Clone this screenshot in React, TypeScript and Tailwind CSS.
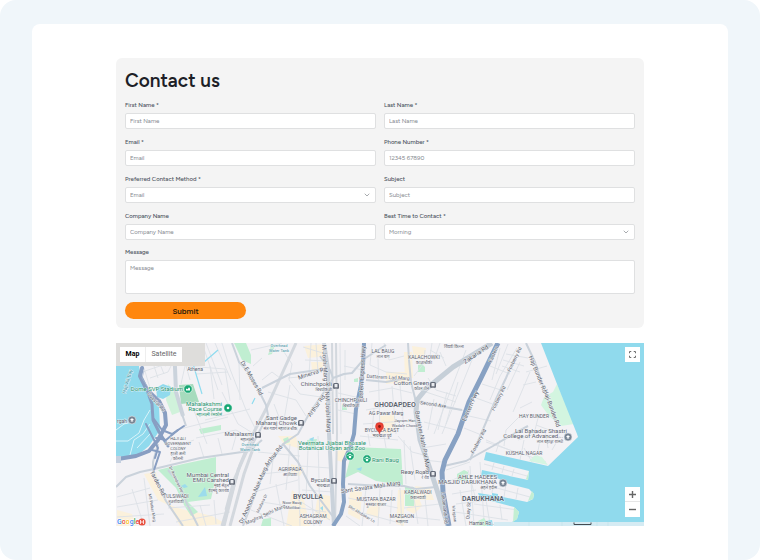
import { FiChevronDown } from "react-icons/fi";
import { twMerge } from "tailwind-merge";

const fieldClass =
  "w-full h-4 block rounded-[2px] border border-[#dfe0e1] bg-white px-1 text-[6px] leading-[8px] text-[#85898f] placeholder:text-[#85898f] outline-none";

const fields = [
  { id: "firstName", label: "First Name *", placeholder: "First Name" },
  { id: "lastName", label: "Last Name *", placeholder: "Last Name" },
  { id: "email", label: "Email *", placeholder: "Email", type: "email" },
  { id: "phone", label: "Phone Number *", placeholder: "12345 67890", type: "tel" },
  { id: "method", label: "Preferred Contact Method *", options: ["Email"] },
  { id: "subject", label: "Subject", placeholder: "Subject" },
  { id: "company", label: "Company Name", placeholder: "Company Name" },
  { id: "time", label: "Best Time to Contact *", options: ["Morning"] },
];

const lanes = [
  "M141 343L143 352 156 363 166 366M131 366L136 374 160 366 174 356M150 378L168 372 172 364M144 368L150 388M154 366L158 378M160 364L164 374",
  "M185 366L181 384M190 380L186 366 225 369 230 401M202 343L218 390M206 343L222 385M215 343L231 380M196 374L228 372M210 366L214 399M222 343L230 369 246 410 256 430",
  "M193 408L207 444M205 420L250 409M222 392L238 424 251 432M239 362L240 400M176 430L228 417M196 438L236 430 250 438",
  "M251 350L282 343M253 366L262 358M284 352L292 364 289 380 300 394 328 398M288 378L310 376 328 368M303 347L326 354M305 360L327 361M311 343L309 375M316 343L318 372",
  "M262 380L272 372 280 378M268 392L296 400 306 416M274 404L282 425 298 430M290 385L284 420M340 343L341 434M344 366L363 370M338 393L360 398M338 410L356 414M345 350L345 380",
  "M372 343L370 365 386 372 407 374M369 392L392 388 412 393M366 410L388 406 416 408M378 358L380 434M392 386L396 434M363 424L418 420M372 434L374 408M384 343L389 360 404 356",
  "M400 385L404 430M425 350L424 363 414 376M428 378L436 390 456 396M430 350L444 358M432 343L430 356 414 359M440 352L446 366M420 400L440 407 468 411M434 399L428 430M447 392L438 430M458 382L446 424M420 390L456 402M424 422L456 430M440 343L434 360",
  "M466 350L434 434M476 350L442 434M490 366L510 374M482 384L504 391M476 398L498 406M469 416L491 421M464 428L484 436M500 348L492 380M508 344L496 374M517 348L500 376 490 400M503 360L524 366M502 366L520 372M506 354L528 358M520 362L507 390",
  "M526 372L547 366M523 385L536 382M530 372L513 412M520 408L532 402M536 425L560 434M518 440L545 430 548 448M504 446L506 430 520 416M486 440L514 452M538 418L534 434M524 448L532 462",
  "M132 489L144 526M144 478L150 526M117 507L158 500M117 517L164 514M117 497L150 488M168 508L210 505M176 522L230 512M200 505L206 526M214 500L216 524M170 462L178 446 194 440M199 442L204 458M218 438L222 454M236 436L232 450",
  "M258 452L300 456M262 474L298 470M274 452L270 484M290 444L286 490M254 492L298 480M262 502L326 512M276 484L284 526M298 440L300 526M308 450L306 498M318 436L320 526M251 510L292 526M300 466L330 468M302 490L334 492M298 500L330 520M312 500L314 526",
  "M360 436L398 440M368 434L370 446M384 436L386 448M404 440L406 484M398 436L412 452 428 456M410 446L415 480M348 498L398 508M352 510L396 522M366 488L362 526M380 488L378 526M392 490L390 524M400 488L402 526M346 516L360 526M404 508L440 504M412 486L418 524M424 488L428 526M402 516L440 520",
  "M422 448L446 444M424 460L442 462M446 470L470 462M448 482L466 474 480 478M452 494L476 490M456 504L490 500M455 512L508 520M460 490L466 526M470 466L474 526M480 462L484 520M486 500L490 524M500 505L502 520M474 504L518 510M468 470L476 500",
  "M484 464L527 476M494 463L492 470M504 466L502 473M514 469L512 476M482 484L530 497M494 478L492 493M506 484L504 497M518 488L516 499M486 442L546 462M500 440L496 452M524 440L520 460M540 440L536 462M560 436L552 450",
];

const roads = [
  "M174 343L176 392 182 414 186 426",
  "M116 487L126 477 140 472 154 469 200 458 249 451 262 440",
  "M158 444L153 462 153 474 166 501 183 526",
  "M168 470L178 482 187 504 198 526",
  "M232 343L239 362 251 375 266 405 268 415 258 434 249 451",
  "M333 379L309 414 298 434 283 444 263 474 243 526",
  "M320 356L330 370 333 378 344 374 352 373 364 359 386 345",
  "M408 343L409 360 411 382 416 402",
  "M348 484L381 486 404 486 416 489 436 487",
  "M444 466L466 461 493 446 515 433 528 426",
  "M526 343L535 362 544 389 557 425",
  "M516 355L506 378 496 399 481 434 470 460",
  "M283 444L298 462 310 486 334 518",
  "M262 388L290 374 324 369",
  "M366 380L386 382 407 378",
  "M418 402L440 406 462 410",
];

const blocks = [
  "M304 346L326 344 328 356 308 358Z",
  "M311 362L324 362 322 370 312 370Z",
  "M404 352L412 352 413 378 405 378Z",
  "M412 346L426 348 424 360 414 359Z",
  "M386 372L408 372 407 382 386 384Z",
  "M144 474L156 472 160 488 168 505 158 500Z",
  "M168 504L178 508 200 514 198 526 180 526Z",
  "M117 510L132 514 136 526 117 526Z",
  "M196 512L212 516 226 524 196 526Z",
  "M278 436L296 436 298 448 284 444Z",
  "M292 490L304 500 310 526 286 526Z",
  "M291 464L304 468 300 476 291 474Z",
  "M318 494L330 496 330 520 314 518Z",
  "M350 490L362 492 360 520 348 514Z",
  "M370 500L382 500 378 518 366 514Z",
  "M398 490L404 490 404 526 396 524Z",
  "M415 486L430 488 434 500 418 500Z",
  "M338 446L350 448 342 462 336 460Z",
  "M380 416L394 414 396 432 382 434Z",
  "M416 490L422 506 414 514 406 510Z",
];

const parks = [
  "M234 343L246 343 251 355 251 364 242 360Z",
  "M199 429L221 425 221 430 201 434Z",
  "M158 470L183 464 216 457 216 477 211 499 188 502 198 512 191 516 184 505 176 488Z",
  "M353 447L401 449 403 485 376 481 358 472 345 478Z",
  "M405 487L414 487 414 506 405 506Z",
  "M418 365L422 364 425 367 425 372 418 372Z",
  "M263 519L271 518 271 526 261 526Z",
  "M457 474L464 470 468 472 468 481 457 480Z",
  "M268 355L271 346 275 345 272 354Z",
  "M283 439L288 437 290 442 285 444Z",
  "M354 379L358 378 358 382 354 382Z",
  "M307 440L317 439 315 448 308 446Z",
  "M342 405L346 404 347 410 342 410Z",
];

const ink = "#5c626d";
const green = "#26946d";
const teal = "#3a93a4";

type Label = {
  t: string;
  x: number;
  y: number;
  s?: number;
  c?: string;
  r?: number; // angle of a street name
  b?: boolean;
  a?: "start" | "end";
};

const labels: Label[] = [
  { t: "Dome SVP Stadium", x: 183, y: 391, s: 6, c: green, a: "end" },
  { t: "Mahalakshmi", x: 222, y: 406, s: 6, c: green, a: "end" },
  { t: "Race Course", x: 222, y: 411, s: 6, c: green, a: "end" },
  { t: "महालक्ष्मी रेसकोर्स", x: 222, y: 416, s: 4, c: green, a: "end" },
  { t: "Haji Ali Bay", x: 129, y: 382, s: 5, c: teal, r: -74 },
  { t: "Coastal Rd", x: 155, y: 403, s: 5, r: 48 },
  { t: "rgah", x: 117, y: 423, s: 5, a: "start" },
  { t: "Mahalaxmi", x: 254, y: 436, s: 6, a: "end" },
  { t: "महालक्ष्मी", x: 254, y: 441, s: 4, a: "end" },
  { t: "Overhead", x: 279, y: 347, s: 4, c: teal },
  { t: "Water Tank", x: 279, y: 352, s: 4, c: teal },
  { t: "Athena", x: 195, y: 371, s: 5 },
  { t: "Minerva Rd", x: 313, y: 375, s: 6, r: -18 },
  { t: "Dr E Moses Rd", x: 250, y: 379, s: 6, r: 60 },
  { t: "M Joshi Marg", x: 323, y: 363, s: 6, r: 87 },
  { t: "NM Joshi Marg", x: 326, y: 412, s: 6, r: 87 },
  { t: "Chinchpokli", x: 332, y: 386, s: 6, a: "end" },
  { t: "चिंचपोकळी", x: 332, y: 391, s: 4, a: "end" },
  { t: "CHINCHPOKLI", x: 351, y: 402, s: 5 },
  { t: "चिंचपोकळी", x: 351, y: 407, s: 4 },
  { t: "Arthur Rd", x: 318, y: 407, s: 6, r: -54 },
  { t: "Sant Gadge", x: 297, y: 420, s: 6, a: "end" },
  { t: "Maharaj Chowk", x: 297, y: 425, s: 6, a: "end" },
  { t: "संत गाडगे महाराज चौक", x: 297, y: 430, s: 4, a: "end" },
  { t: "Eastern Express Hwy", x: 364, y: 374, s: 6, r: -87 },
  { t: "LAL BAUG", x: 383, y: 353, s: 5 },
  { t: "लाल बाग", x: 383, y: 358, s: 4 },
  { t: "Dattaram Lad Marg", x: 388, y: 379, s: 5, r: 3 },
  { t: "KALACHOWKI", x: 424, y: 359, s: 5 },
  { t: "काळाचौकी", x: 424, y: 364, s: 4 },
  { t: "शिवडी किल्ला", x: 454, y: 348, s: 4 },
  { t: "Zakaria Rd", x: 477, y: 356, s: 6, r: -34 },
  { t: "Cotton Green", x: 429, y: 385, s: 6, a: "end" },
  { t: "कॉटन ग्रीन", x: 429, y: 390, s: 4, a: "end" },
  { t: "GHODAPDEO", x: 395, y: 407, s: 7, b: true },
  { t: "AG Pawar Marg", x: 386, y: 415, s: 5 },
  { t: "Second Ave", x: 433, y: 406, s: 5, r: 8 },
  { t: "BYCULLA EAST", x: 382, y: 432, s: 5 },
  { t: "भायखळा पूर्व", x: 382, y: 437, s: 4 },
  { t: "Jayram Hari", x: 405, y: 422, s: 4 },
  { t: "Wadale Chowk", x: 405, y: 427, s: 4 },
  { t: "Barrister Nath Pai Marg", x: 421, y: 442, s: 6, r: 79 },
  { t: "Eastern Fwy", x: 472, y: 407, s: 6, r: -66 },
  { t: "Eastern", x: 495, y: 355, s: 5, r: -66 },
  { t: "Fosberry Rd", x: 500, y: 399, s: 5, r: -64 },
  { t: "Fosberry Rd", x: 516, y: 360, s: 5, r: -64 },
  { t: "Fosberry Rd", x: 480, y: 442, s: 5, r: -62 },
  { t: "Haji Bunder Rd", x: 536, y: 375, s: 6, r: 68 },
  { t: "Haji Bunder Rd", x: 550, y: 409, s: 6, r: 70 },
  { t: "HAY BUNDER", x: 534, y: 418, s: 5 },
  { t: "Lal Bahadur Shastri", x: 541, y: 433, s: 6 },
  { t: "College of Advanced...", x: 563, y: 438, s: 6, a: "end" },
  { t: "लाल बहादुर शास्त्री", x: 563, y: 443, s: 4, a: "end" },
  { t: "KUSHAL NAGAR", x: 524, y: 455, s: 5 },
  { t: "HAJI ALI", x: 178, y: 440, s: 4 },
  { t: "GOVERNMENT", x: 178, y: 445, s: 4 },
  { t: "COLONY", x: 178, y: 450, s: 4 },
  { t: "हाजी अली", x: 178, y: 455, s: 4 },
  { t: "कॉलनी", x: 178, y: 460, s: 4 },
  { t: "Overhead", x: 250, y: 446, s: 4, c: teal },
  { t: "Water Tank", x: 250, y: 451, s: 4, c: teal },
  { t: "Mumbai Central", x: 229, y: 477, s: 6, a: "end" },
  { t: "EMU Carshed", x: 229, y: 482, s: 6, a: "end" },
  { t: "मुंबई सेंट्रल", x: 229, y: 487, s: 4, a: "end" },
  { t: "ईएमयू कारशेड", x: 229, y: 492, s: 4, a: "end" },
  { t: "TULSIWADI", x: 176, y: 498, s: 5 },
  { t: "तुळशीवाडी", x: 176, y: 503, s: 4 },
  { t: "Tardeo Rd", x: 156, y: 484, s: 6, r: 63 },
  { t: "Dr Anandrao Rd", x: 175, y: 480, s: 4, r: 65 },
  { t: "MS Patkar Marg", x: 151, y: 508, s: 4, r: 80 },
  { t: "Dr Anandrao Nair Marg", x: 255, y: 496, s: 6, r: -66 },
  { t: "Arthur Rd", x: 275, y: 457, s: 6, r: -52 },
  { t: "Maulana Dr", x: 263, y: 504, s: 4, r: -64 },
  { t: "Maghraj Sethi Marg", x: 266, y: 516, s: 5, r: -24 },
  { t: "AGRIPADA", x: 290, y: 471, s: 5 },
  { t: "आग्रीपाडा", x: 290, y: 476, s: 4 },
  { t: "Noor Baug", x: 292, y: 504, s: 4 },
  { t: "Veermata Jijabai Bhosale", x: 332, y: 445, s: 6, c: green },
  { t: "Botanical Udyan and Zoo", x: 332, y: 450, s: 6, c: green },
  { t: "Rani Baug", x: 372, y: 462, s: 6, c: green, a: "start" },
  { t: "Byculla", x: 330, y: 482, s: 6, a: "end" },
  { t: "भायखळा", x: 330, y: 487, s: 4, a: "end" },
  { t: "BYCULLA", x: 308, y: 499, s: 7, b: true },
  { t: "Motlibai", x: 293, y: 509, s: 4 },
  { t: "ASHAGRAM", x: 313, y: 518, s: 5 },
  { t: "COLONY", x: 313, y: 524, s: 5 },
  { t: "Sant Savata Mali Marg", x: 371, y: 489, s: 6, r: -8 },
  { t: "MUSTAFA BAZAR", x: 376, y: 501, s: 5 },
  { t: "मुस्तफा बाजार", x: 376, y: 506, s: 4 },
  { t: "Shri Abubakar Ln", x: 361, y: 515, s: 4, r: 31 },
  { t: "KABALWADI", x: 418, y: 494, s: 5 },
  { t: "कबालवाडी", x: 418, y: 499, s: 4 },
  { t: "MAZGAON", x: 402, y: 518, s: 5 },
  { t: "माझगाव", x: 402, y: 523, s: 4 },
  { t: "Reay Road", x: 429, y: 474, s: 6, a: "end" },
  { t: "रे रोड", x: 429, y: 479, s: 4, a: "end" },
  { t: "Lakamandi Rd", x: 443, y: 508, s: 5, r: 84 },
  { t: "Mazgaon", x: 453, y: 514, s: 4, r: 84 },
  { t: "AHLE HADEES", x: 497, y: 479, s: 6, a: "end" },
  { t: "MASJID DARUKHANA", x: 497, y: 484, s: 6, a: "end" },
  { t: "अहले हदीस", x: 497, y: 489, s: 4, a: "end" },
  { t: "DARUKHANA", x: 483, y: 501, s: 7, b: true },
  { t: "Quay St", x: 470, y: 511, s: 5, r: -85 },
  { t: "Hamar Ro...", x: 482, y: 525, s: 5 },
];

const stations = [
  [336, 386],
  [258, 435],
  [433, 385],
  [232, 482],
  [334, 481],
  [433, 474],
  [301, 423],
];

const greenPins = [
  [188, 389],
  [228, 408],
  [350, 456],
  [367, 459],
];

const grayPins = [
  [132, 420],
  [568, 437],
  [503, 483],
];

function Field({ field }: { field: (typeof fields)[number] }) {
  return (
    <div className="flex flex-col gap-1">
      <label htmlFor={field.id} className="text-[6px] leading-[8px] font-medium text-[#4a525d]">
        {field.label}
      </label>
      {field.options ? (
        <div className="relative">
          <select id={field.id} className={twMerge(fieldClass, "appearance-none")}>
            {field.options.map((option) => (
              <option key={option}>{option}</option>
            ))}
          </select>
          <FiChevronDown className="absolute right-[5px] top-1 w-2 h-2 text-[#7c8086] pointer-events-none" />
        </div>
      ) : (
        <input
          id={field.id}
          type={field.type ?? "text"}
          placeholder={field.placeholder}
          className={fieldClass}
        />
      )}
    </div>
  );
}

function MapDrawing() {
  return (
    <svg
      viewBox="116 343 528 183"
      className="block w-full h-auto"
      fontFamily="Roboto, 'Noto Sans', sans-serif"
      role="img"
      aria-label="Map">
      <rect x="116" y="343" width="528" height="183" fill="#f3f2f5" />
      {blocks.map((d) => (
        <path key={d} d={d} fill="#fbf1dc" />
      ))}
      <path d="M168 384L174 390 178 402 180 412 172 415 166 400Z" fill="#d0f2db" />
      <path d="M179 385L193 384 199 402 181 404Z" fill="#a6dbbd" />
      {parks.map((d) => (
        <path key={d} d={d} fill="#c0eed1" />
      ))}
      <path d="M557 384L574 424 561 426 549 416 541 405 544 397 553 392Z" fill="#d3f5e0" />
      <g fill="none" stroke="#dce1e7" strokeWidth="0.9">
        {lanes.map((d) => (
          <path key={d} d={d} />
        ))}
      </g>
      {/* rail yards */}
      <g fill="none" stroke="#d3d8de">
        <path d="M296 343L266 409 253 434 240 465 222 526" strokeWidth="3" />
        <path d="M252 440L238 470 224 526M254 446L244 474 230 526M249 446L234 480 226 510" strokeWidth="3" />
        <path d="M336 343L337 434 335 526M332 343L333 434" strokeWidth="2" />
      </g>
      <g fill="none" stroke="#cad2db" strokeWidth="2" strokeLinejoin="round">
        {roads.map((d) => (
          <path key={d} d={d} />
        ))}
      </g>
      <path d="M174 343L176 392 183 416" fill="none" stroke="#cbd3dc" strokeWidth="4" />
      <path d="M324 343L328 369 329 434 334 526" fill="none" stroke="#cad2db" strokeWidth="4" />
      <path
        d="M492 343L453 367 426 389 417 400 416 412 420 440 427 460 436 487 448 526"
        fill="none"
        stroke="#c6cfd8"
        strokeWidth="5"
        strokeLinejoin="round"
      />
      {/* harbour */}
      <path
        d="M541 343L557 384 577 434 578 437 548 466 486 452 484 460 529 471 528 480 482 470 481 476 495 477 509 484 529 489 534 494 533 499 527 502 503 497 478 493 480 498 514 507 519 512 517 519 512 522 494 526 644 526 644 343Z"
        fill="#90daed"
      />
      <path d="M548 465L529 461 535 455 542 457Z" fill="#d5f5e2" />
      <path d="M529 471L526 479 528 480ZM532 491L534 494 533 499 528 501ZM514 507L519 512 517 519 513 522ZM478 521L484 518 490 526 474 526Z" fill="#c3efd3" />
      <path d="M486 521L492 520 493 526 487 526ZM492 493L498 494 498 497 492 496Z" fill="#90daed" />
      {/* Haji Ali bay */}
      <path
        d="M116 366L139 366 141 380 149 393 159 404 160 430 149 446 138 455 116 459Z"
        fill="#90daed"
      />
      <path d="M156 388L163 384 171 387 170 395 163 399 157 397Z" fill="#90daed" />
      <path
        d="M116 441L128 441 139 433 144 420 150 410M130 455L134 440 143 434 150 424M116 430L124 424 132 422M137 448L150 434"
        fill="none"
        stroke="#d9f4fa"
        strokeWidth="1"
      />
      <path d="M193 364L202 394M203 363L218 350M252 404L255 398" stroke="#8fdcf0" strokeWidth="1.2" />
      <path d="M198 497L205 487 207 496ZM181 486L185 484 188 487 184 488ZM356 469L362 467 361 471ZM309 439L314 437 313 442ZM320 508L323 506 323 511Z" fill="#9cdcec" />
      <g fill="none" stroke="#889ec2" strokeLinejoin="round" strokeLinecap="round">
        <path d="M142 368L140 376 147 390 159 401 165 413 166 425 158 440 149 451 136 456 118 459" strokeWidth="4" />
        <path d="M148 393L152 404 153 420 159 432 168 446" strokeWidth="3" />
        <path d="M184 426L172 434 162 430 154 419M152 450L160 452 154 470" strokeWidth="2" />
        <path d="M146 424L158 448 155 458M178 430L166 440 156 438" strokeWidth="2" />
      </g>
      <path d="M144 371L142 378 149 389 160 400" fill="none" stroke="#a9b9d3" strokeWidth="0.7" />
      <g fill="none" stroke="#87a1c3" strokeLinejoin="round">
        <path d="M364 343L363 366 361 385 356 409 354 434 350 448 344 461 343 484 344 502 341 514 333 526" strokeWidth="4" />
        <path d="M498 343L481 378 469 402 458 434 445 460 442 472 443 492 449 526" strokeWidth="5" />
      </g>
      <path d="M116 456H121V463H116Z" fill="#c5d0df" />
      <g stroke="#f6f7f9" strokeOpacity="0.8" strokeWidth="1" paintOrder="stroke" strokeLinejoin="round">
        {labels.map((l, i) => (
          <text
            key={i}
            x={l.x}
            y={l.y}
            fontSize={l.s ?? 5}
            fontWeight={l.b ? 600 : 400}
            fill={l.c ?? ink}
            textAnchor={l.a ?? "middle"}
            transform={l.r ? `rotate(${l.r} ${l.x} ${l.y})` : undefined}>
            {l.t}
          </text>
        ))}
      </g>
      {stations.map(([x, y]) => (
        <g key={`${x}-${y}`}>
          <rect x={x - 3} y={y - 3} width="6" height="6" rx="1.5" fill="#656b78" />
          <rect x={x - 1.5} y={y - 2} width="3" height="3" rx="0.5" fill="#e9ebef" />
          <path d={`M${x - 1.5} ${y + 2}H${x + 1.5}`} stroke="#e9ebef" strokeWidth="0.6" />
        </g>
      ))}
      {greenPins.map(([x, y], i) => (
        <g key={i}>
          <circle cx={x} cy={y} r="4.2" fill="#16a673" stroke="#fff" strokeWidth="0.6" />
          {i === 0 && (
            <path d={`M${x - 2} ${y + 1.6}V${y - 0.6}L${x - 0.5} ${y + 0.3} ${x + 1} ${y - 1.8} ${x + 2} ${y - 0.4}V${y + 1.6}Z`} fill="#fff" />
          )}
          {i === 1 && <circle cx={x} cy={y} r="1.3" fill="#fff" />}
          {i > 1 && (
            <g fill="#fff">
              <circle cx={x} cy={y + 1} r="1.3" />
              <circle cx={x - 2} cy={y - 0.4} r="0.6" />
              <circle cx={x - 0.7} cy={y - 1.6} r="0.6" />
              <circle cx={x + 0.7} cy={y - 1.6} r="0.6" />
              <circle cx={x + 2} cy={y - 0.4} r="0.6" />
            </g>
          )}
        </g>
      ))}
      {grayPins.map(([x, y]) => (
        <g key={x}>
          <circle cx={x} cy={y} r="4" fill="#788594" stroke="#e5eaee" strokeWidth="0.6" />
          <path d={`M${x - 2} ${y - 0.5}L${x} ${y - 1.8} ${x + 2} ${y - 0.5} ${x} ${y + 0.6}ZM${x - 1.2} ${y + 0.6}V${y + 1.6}H${x + 1.2}V${y + 0.6}`} fill="#fff" />
        </g>
      ))}
      <path d="M379.5 434C379 430.5 375.5 430 375.5 426.5A4 4 0 0 1 383.5 426.5C383.5 430 380 430.5 379.5 434Z" fill="#ea4335" stroke="#c5221f" strokeWidth="0.4" />
      <circle cx="379.5" cy="426.5" r="1.4" fill="#8c1a14" />
      {/* attribution strip and scale */}
      <rect x="494" y="522" width="150" height="4" fill="#d5ebf3" />
      <path d="M529 522V526M562 522V526M597 522V526M608 522V526" stroke="#bfe0ea" strokeWidth="0.6" />
      <path d="M574 522.5V524.5H591V522.5" fill="none" stroke="#444b52" strokeWidth="1" />
      <text x="117" y="524" fontSize="7" fontWeight="500" stroke="#fff" strokeWidth="1" paintOrder="stroke">
        <tspan fill="#4285f4">G</tspan>
        <tspan fill="#ea4335">o</tspan>
        <tspan fill="#fbbc04">o</tspan>
        <tspan fill="#4285f4">g</tspan>
        <tspan fill="#34a853">l</tspan>
        <tspan fill="#ea4335">e</tspan>
      </text>
      <circle cx="142" cy="522" r="3.6" fill="#e8503f" />
      <path d="M140.5 520V524M143.5 520V524M140.5 522H143.5" stroke="#fff" strokeWidth="0.8" />
    </svg>
  );
}

export default function App() {
  return (
    <main className="min-h-screen flex bg-[#f0f6fa] rounded-2xl overflow-hidden px-8 pt-6 font-['Figtree','Inter','Liberation_Sans',sans-serif]">
      <div className="flex-1 bg-white rounded-t-lg px-[84px] pt-[34px] pb-8">
        <form className="bg-[#f4f4f4] rounded-md px-[9px] pt-[11px] pb-[9px]" onSubmit={(e) => e.preventDefault()}>
          <h1 className="text-[19px] leading-[24px] font-semibold text-[#1d1f27] mb-2">Contact us</h1>
          <div className="grid grid-cols-2 gap-x-2 gap-y-[9px]">
            {fields.map((field) => (
              <Field key={field.id} field={field} />
            ))}
          </div>
          <div className="flex flex-col gap-1 mt-2">
            <label htmlFor="message" className="text-[6px] leading-[8px] font-medium text-[#4a525d]">
              Message
            </label>
            <textarea
              id="message"
              placeholder="Message"
              className={twMerge(fieldClass, "h-[34px] pt-[3px] resize-none")}
            />
          </div>
          <button
            type="submit"
            className="mt-2 block w-[121px] h-[17px] rounded-full bg-[#ff870f] text-[8px] leading-[8px] font-semibold text-[#2a1a0c]">
            Submit
          </button>
        </form>

        <section className="relative mt-[15px] overflow-hidden">
          <MapDrawing />
          <div className="absolute left-0 top-0 bg-[#dedddb] pl-1 pr-[23px] py-1 flex font-[Roboto,sans-serif] text-[7px] leading-[15px]">
            <button className="w-[25px] bg-white font-bold text-black">Map</button>
            <button className="w-[37px] bg-white text-[#666] border-l border-[#eee]">Satellite</button>
          </div>
          <button
            aria-label="Fullscreen"
            className="absolute right-1 top-1 w-[15px] h-[15px] bg-white flex items-center justify-center text-[#666]">
            <svg viewBox="0 0 8 8" className="w-[7px] h-[7px]" fill="none" stroke="currentColor" strokeWidth="1.1">
              <path d="M0.6 2.6V0.6H2.6M5.4 0.6H7.4V2.6M7.4 5.4V7.4H5.4M2.6 7.4H0.6V5.4" />
            </svg>
          </button>
          <div className="absolute right-1 bottom-[9px] w-[15px] bg-white flex flex-col text-[#666] divide-y divide-[#e6e6e6]">
            {["M0 4H8M4 0V8", "M0 4H8"].map((d, i) => (
              <button
                key={d}
                aria-label={i === 0 ? "Zoom in" : "Zoom out"}
                className="h-[15px] flex items-center justify-center">
                <svg viewBox="0 0 8 8" className="w-[7px] h-[7px]" stroke="currentColor" strokeWidth="1.6">
                  <path d={d} />
                </svg>
              </button>
            ))}
          </div>
        </section>
      </div>
    </main>
  );
}
